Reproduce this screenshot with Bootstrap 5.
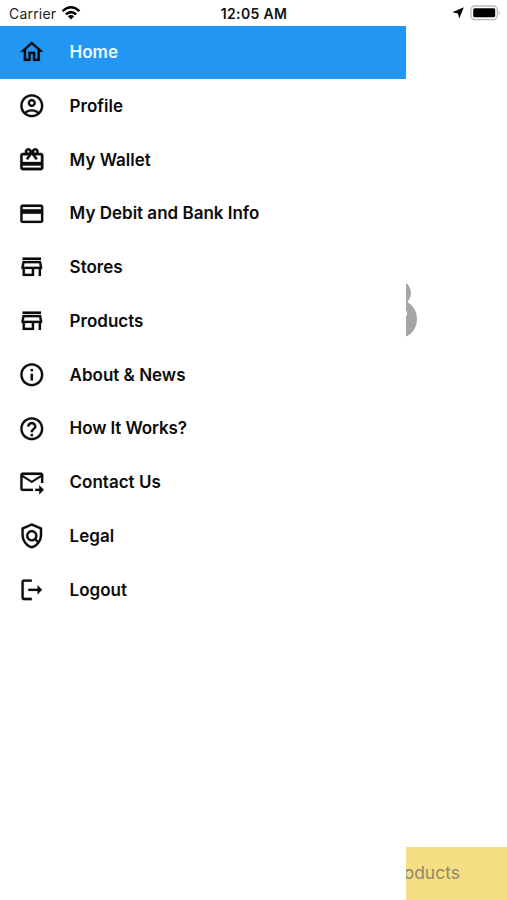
<!DOCTYPE html>
<html lang="en">
<head>
<meta charset="utf-8">
<meta name="viewport" content="width=device-width, initial-scale=1">
<title>Menu</title>
<link href="https://cdn.jsdelivr.net/npm/bootstrap@5.3.0/dist/css/bootstrap.min.css" rel="stylesheet">
<style>
  body { font-family: Inter, "Liberation Sans", sans-serif; color: #111; }
  .screen { height: 900px; }
  .status-bar { height: 25.5px; font-size: 14px; padding: 1px 6px 0 9px; }
  .status-bar .clock { font-weight: 600; font-size: 14px; letter-spacing: .35px; padding-right: 2px; }
  .status-bar .carrier { letter-spacing: .2px; color: #222; }
  .drawer { width: 406px; top: 25.5px; z-index: 2; }
  .drawer .menu-row { height: 53.75px; padding: 0 0 0 17.5px; gap: 24.5px; font-size: 17px; font-weight: 600; color: #0c0c0c; }
  .drawer .menu-row span { padding-top: 1.4px; }
  .drawer .menu-row svg { width: 27.6px; height: 27.6px; flex: none; fill: #0c0c0c; stroke: #0c0c0c; stroke-width: .15; }
  .drawer .menu-row.current { background: #2196f3; color: #e9f9ff; height: 53.5px; }
  .brand { padding: 258.5px 0 0 396px; line-height: 0; }
  .bottom-action { height: 53.5px; background: #f5df85; color: #918769; font-size: 17.5px; padding-right: 47px; }
</style>
</head>
<body>
<div class="screen d-flex flex-column position-relative overflow-hidden bg-white">
  <header class="status-bar d-flex align-items-center justify-content-between">
    <div class="col d-flex align-items-center carrier">Carrier
      <svg width="20" height="16" viewBox="0 0 20 16" fill="none" stroke="#000" stroke-width="2.6" style="margin-left:5px"><path d="M1.6 6.1Q10-1.6 18.4 6.1M4.8 9.4Q10 4.8 15.2 9.4"/><path d="M10 14.4L6.8 11.3Q10 8.7 13.2 11.3Z" fill="#000" stroke="none"/></svg>
    </div>
    <div class="clock">12:05 AM</div>
    <div class="col d-flex align-items-center justify-content-end">
      <svg width="12" height="12" viewBox="0 0 12 12"><path d="M11.8.2L7.300 11.500 6 6.400.4 5.300z"/></svg>
      <svg width="31" height="16" viewBox="0 0 31 16" style="margin-left:6px"><rect x=".9" y="1" width="26.5" height="13.6" rx="4" fill="#fff" stroke="#bbb" stroke-width="1.4"/><rect x="3.2" y="3.3" width="22" height="9" rx="1.6"/><path d="M28.7 5.5q2.3 2.3 0 4.6z" fill="#bbb"/></svg>
    </div>
  </header>

  <main class="flex-grow-1 brand">
    <svg width="22" height="53" viewBox="0 0 22 53"><g fill="#a5a5a5"><ellipse cx="5" cy="9" rx="10" ry="11.500"/><ellipse cx="5" cy="35" rx="16" ry="18.500"/></g><circle cx="7.300" cy="29.300" r="3.800" fill="#fff"/></svg>
  </main>

  <footer class="bottom-action d-flex align-items-center justify-content-end">Products</footer>

  <nav class="drawer position-absolute start-0 bottom-0 bg-white d-flex flex-column">
    <a class="menu-row current d-flex align-items-center text-decoration-none" href="#"><svg viewBox="0 0 24 24"><path d="M12 5.69l5 4.5V18h-2v-6H9v6H7v-7.81l5-4.5M12 3L2 12h3v8h6v-6h2v6h6v-8h3L12 3z"/></svg><span>Home</span></a>
    <a class="menu-row d-flex align-items-center text-decoration-none" href="#"><svg viewBox="0 0 24 24"><path d="M12 2C6.480 2 2 6.480 2 12s4.480 10 10 10 10-4.480 10-10S17.520 2 12 2zM7.350 18.500C8.660 17.560 10.260 17 12 17s3.340.56 4.650 1.500C15.340 19.440 13.740 20 12 20s-3.340-.56-4.650-1.500zm10.790-1.380C16.450 15.800 14.320 15 12 15s-4.450.8-6.140 2.120C4.700 15.730 4 13.950 4 12c0-4.420 3.580-8 8-8s8 3.580 8 8c0 1.950-.7 3.730-1.860 5.120zM12 6c-1.930 0-3.500 1.570-3.500 3.500S10.070 13 12 13s3.500-1.570 3.500-3.500S13.930 6 12 6zm0 5c-.83 0-1.500-.67-1.500-1.500S11.170 8 12 8s1.500.67 1.500 1.500S12.830 11 12 11z"/></svg><span>Profile</span></a>
    <a class="menu-row d-flex align-items-center text-decoration-none" href="#"><svg viewBox="0 0 24 24"><path stroke-width=".35" d="M20 6h-2.180c.11-.31.18-.65.18-1 0-1.660-1.340-3-3-3-1.050 0-1.960.54-2.500 1.350l-.5.670-.5-.68C10.960 2.540 10.050 2 9 2 7.340 2 6 3.340 6 5c0 .35.07.69.18 1H4c-1.110 0-1.990.89-1.990 2L2 19c0 1.110.89 2 2 2h16c1.110 0 2-.89 2-2V8c0-1.110-.89-2-2-2zm-5-2c.55 0 1 .45 1 1s-.45 1-1 1-1-.45-1-1 .45-1 1-1zM9 4c.55 0 1 .45 1 1s-.45 1-1 1-1-.45-1-1 .45-1 1-1zm11 15H4v-2h16v2zm0-5H4V8h5.080L7 10.830 8.620 12 12 7.400l3.380 4.600L17 10.830 14.920 8H20v6z"/></svg><span>My Wallet</span></a>
    <a class="menu-row d-flex align-items-center text-decoration-none" href="#"><svg viewBox="0 0 24 24"><path d="M20 4H4c-1.110 0-1.990.89-1.990 2L2 18c0 1.110.89 2 2 2h16c1.110 0 2-.89 2-2V6c0-1.110-.89-2-2-2zm0 14H4v-6h16v6zm0-10H4V6h16v2z"/></svg><span>My Debit and Bank Info</span></a>
    <a class="menu-row d-flex align-items-center text-decoration-none" href="#"><svg viewBox="0 0 24 24"><path d="M18.360 9l.6 3H5.040l.6-3h12.720M20 4H4v2h16V4zm0 3H4l-1 5v2h1v6h10v-6h4v6h2v-6h1v-2l-1-5zM6 18v-4h6v4H6z"/></svg><span>Stores</span></a>
    <a class="menu-row d-flex align-items-center text-decoration-none" href="#"><svg viewBox="0 0 24 24"><path d="M18.360 9l.6 3H5.040l.6-3h12.720M20 4H4v2h16V4zm0 3H4l-1 5v2h1v6h10v-6h4v6h2v-6h1v-2l-1-5zM6 18v-4h6v4H6z"/></svg><span>Products</span></a>
    <a class="menu-row d-flex align-items-center text-decoration-none" href="#"><svg viewBox="0 0 24 24"><path d="M11 7h2v2h-2zm0 4h2v6h-2zm1-9C6.480 2 2 6.480 2 12s4.480 10 10 10 10-4.480 10-10S17.520 2 12 2zm0 18c-4.410 0-8-3.590-8-8s3.590-8 8-8 8 3.590 8 8-3.590 8-8 8z"/></svg><span>About &amp; News</span></a>
    <a class="menu-row d-flex align-items-center text-decoration-none" href="#"><svg viewBox="0 0 24 24"><path d="M11 16.500h2v2h-2v-2zm1-14.500C6.480 2 2 6.480 2 12s4.480 10 10 10 10-4.480 10-10S17.520 2 12 2zm0 18c-4.410 0-8-3.590-8-8s3.590-8 8-8 8 3.590 8 8-3.590 8-8 8zm0-14c-2.210 0-4 1.790-4 4h2c0-1.100.9-2 2-2s2 .9 2 2c0 2-3 1.750-3 5h2c0-2.250 3-2.500 3-5 0-2.210-1.790-4-4-4z"/></svg><span style="letter-spacing:-.1px">How It Works?</span></a>
    <a class="menu-row d-flex align-items-center text-decoration-none" href="#"><svg viewBox="0 0 24 24"><path d="M20 4H4c-1.100 0-2 .9-2 2v12c0 1.100.9 2 2 2h9v-2H4V8l8 5 8-5v5h2V6c0-1.100-.9-2-2-2zm-8 7L4 6h16l-8 5zM18.500 15l4 4-4 4v-3H15v-2h3.500z"/></svg><span>Contact Us</span></a>
    <a class="menu-row d-flex align-items-center text-decoration-none" href="#"><svg viewBox="0 0 24 24"><path d="M12 1L3 5v6c0 5.550 3.840 10.740 9 12 5.160-1.260 9-6.450 9-12V5l-9-4zm7 10c0 1.850-.51 3.650-1.380 5.210l-1.450-1.450c1.290-1.940 1.070-4.580-.64-6.290-1.950-1.950-5.120-1.950-7.070 0-1.950 1.950-1.950 5.120 0 7.070 1.710 1.710 4.350 1.920 6.290.64l1.720 1.720c-1.190 1.420-2.730 2.510-4.470 3.040-4.020-1.250-7-5.420-7-9.940V6.300l7-3.110 7 3.110V11zm-7 4c-1.660 0-3-1.340-3-3s1.340-3 3-3 3 1.340 3 3-1.340 3-3 3z"/></svg><span>Legal</span></a>
    <a class="menu-row d-flex align-items-center text-decoration-none" href="#"><svg viewBox="0 0 24 24"><path d="M12 3H5a2 2 0 0 0-2 2v14a2 2 0 0 0 2 2h7v-2H5V5h7zM17 8v3H9v2h8v3l4-4z"/></svg><span>Logout</span></a>
  </nav>
</div>
<script src="https://cdn.jsdelivr.net/npm/bootstrap@5.3.0/dist/js/bootstrap.bundle.min.js"></script>
</body>
</html>
